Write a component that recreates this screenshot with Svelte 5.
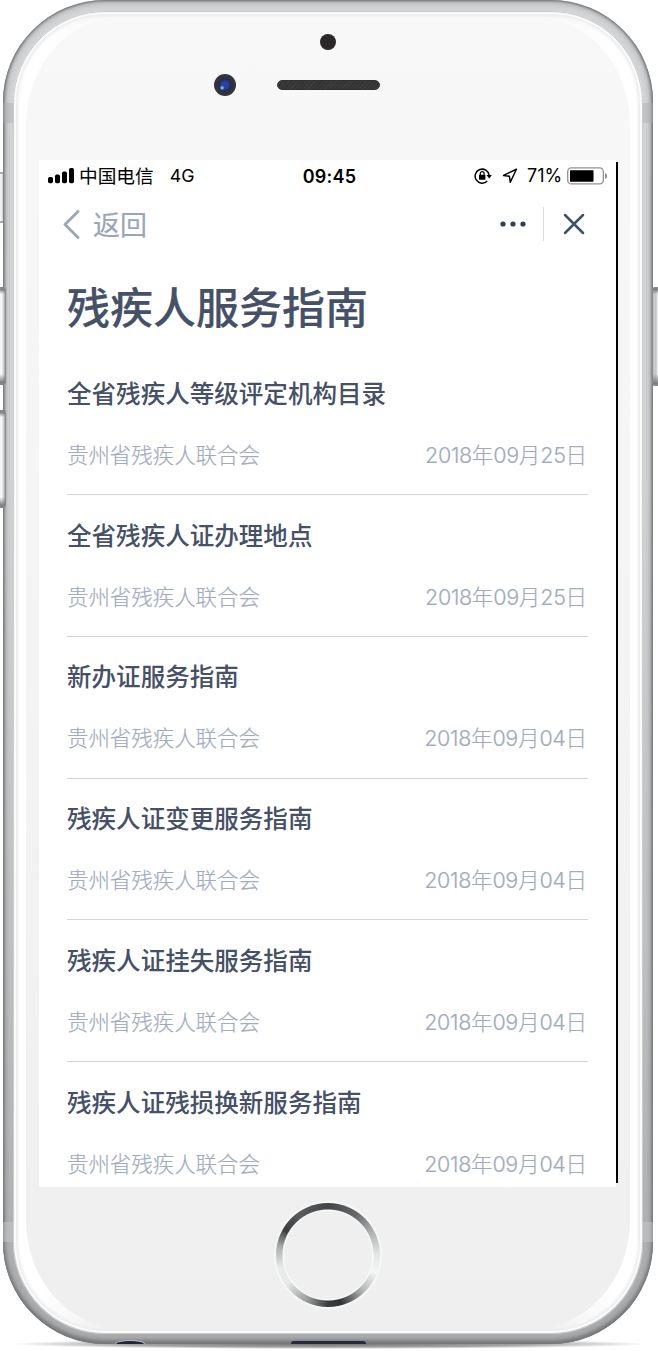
<script>
  const org = '贵州省残疾人联合会';
  const items = [
    { title: '全省残疾人等级评定机构目录', date: ['2018', '09', '25'] },
    { title: '全省残疾人证办理地点', date: ['2018', '09', '25'] },
    { title: '新办证服务指南', date: ['2018', '09', '04'] },
    { title: '残疾人证变更服务指南', date: ['2018', '09', '04'] },
    { title: '残疾人证挂失服务指南', date: ['2018', '09', '04'] },
    { title: '残疾人证残损换新服务指南', date: ['2018', '09', '04'] }
  ];
</script>

<div class="stage">
  <i class="ground"></i>
  <i class="key mute"></i>
  <i class="key up"></i>
  <i class="key down"></i>
  <i class="key power"></i>
  <div class="phone">
    <i class="band tl"></i><i class="band tr"></i><i class="band bl"></i><i class="band br"></i>
    <i class="jack"></i><i class="port"></i>
    <div class="bezel">
      <div class="face">
        <div class="top">
          <i class="sensor"></i>
          <i class="lens"></i>
          <i class="speaker"></i>
        </div>
        <div class="screen">
          <div class="status">
            <div class="side">
              <svg class="signal" width="27" height="16" viewBox="0 0 27 16">
                <rect x="0" y="9" width="5" height="6.3" rx="1.7" /><rect x="7" y="6.5" width="5" height="8.8" rx="1.7" />
                <rect x="14" y="3.5" width="5" height="11.8" rx="1.7" /><rect x="21" y="0" width="5" height="15.3" rx="1.7" />
              </svg>
              <span class="carrier">中国电信</span>
              <span class="net">4G</span>
            </div>
            <div class="clock">09:45</div>
            <div class="side right">
              <svg class="lock" width="18" height="18" viewBox="0 0 18 18" fill="none" stroke="#000" stroke-width="1.5">
                <path d="M13.2 14A7 7 0 1 1 15.1 8.4" />
                <path d="M12.5 8h5.4l-2.7 3.6z" fill="#000" stroke="none" />
                <rect x="5" y="7.8" width="6.4" height="5" rx=".6" fill="#000" stroke="none" />
                <path d="M6.3 8.3V6.5a1.9 1.9 0 0 1 3.8 0v1.8" stroke-width="1.2" />
              </svg>
              <svg class="arrow" width="16" height="16" viewBox="0 0 16 16" fill="none" stroke="#000" stroke-width="1.5" stroke-linejoin="round">
                <path d="M14.4 1.2L1.5 7.4l5.9.9.9 5.9z" />
              </svg>
              <span class="pct">71%</span>
              <svg class="battery" width="41" height="18" viewBox="0 0 41 18">
                <rect x=".7" y=".9" width="35.6" height="16" rx="3.6" fill="none" stroke="#929292" stroke-width="1.3" />
                <rect x="3" y="3.2" width="23.5" height="11.5" rx=".6" />
                <path d="M38 6c2.8.6 2.8 5.4 0 6z" fill="#929292" />
              </svg>
            </div>
          </div>
          <div class="nav">
            <svg class="chev" width="18" height="30" viewBox="0 0 18 30" fill="none" stroke="#9aa5ba" stroke-width="2.8" stroke-linecap="round" stroke-linejoin="round">
              <path d="M15 2.5L2 15.5l13 13" />
            </svg>
            <span class="back">返回</span>
            <svg class="more" width="26" height="6" viewBox="0 0 26 6" fill="#323e54">
              <circle cx="3" cy="3" r="2.6" /><circle cx="13" cy="3" r="2.6" /><circle cx="23" cy="3" r="2.6" />
            </svg>
            <i class="rule"></i>
            <svg class="close" width="22" height="22" viewBox="0 0 22 22" fill="none" stroke="#42506a" stroke-width="2.5" stroke-linecap="round">
              <path d="M2 2l18 18M20 2L2 20" />
            </svg>
          </div>
          <h1>残疾人服务指南</h1>
          <ul>
            {#each items as item}
              <li>
                <h2>{item.title}</h2>
                <p>
                  <span>{org}</span>
                  <span class="date"><b>{item.date[0]}</b>年<b>{item.date[1]}</b>月<b>{item.date[2]}</b>日</span>
                </p>
              </li>
            {/each}
          </ul>
        </div>
        <i class="home"></i>
      </div>
    </div>
  </div>
</div>

<style>
  :global(body) { margin: 0; background: #fff; }
  * { box-sizing: border-box; }
  i { display: block; }
  .stage {
    position: relative;
    width: 658px;
    height: 1351px;
    padding: 0 5px 7px 3px;
    overflow: hidden;
    font-family: Inter, "Noto Sans CJK SC", sans-serif;
  }
  .ground {
    position: absolute;
    left: 12px;
    right: 12px;
    top: 1339px;
    height: 10px;
    background: radial-gradient(ellipse at center, rgba(0, 0, 0, .55) 0%, rgba(0, 0, 0, .36) 45%, rgba(0, 0, 0, 0) 71%);
  }
  .key {
    position: absolute;
    border: solid #85878a;
    background: linear-gradient(90deg, #fafafa, #e2e3e5 40%, #a5a7a9);
  }
  .mute { left: 0; top: 172px; width: 5px; height: 51px; border-width: 2px 0; border-color: #aaa; }
  .up, .down {
    left: 0;
    width: 6px;
    height: 98px;
    border-width: 2px 1px 2px 0;
    border-radius: 0 3px 3px 0;
    background: linear-gradient(#777 0, transparent 5px, transparent 85px, #777), linear-gradient(90deg, #f4f6f8 0 40%, #a7a9ab);
    z-index: 1;
  }
  .up { top: 287px; }
  .down { top: 410px; }
  .power {
    right: 0;
    top: 287px;
    width: 6px;
    height: 99px;
    border-width: 2px 0 2px 1px;
    border-radius: 3px 0 0 3px;
    background: linear-gradient(#777 0, transparent 5px, transparent 85px, #777), linear-gradient(90deg, #c5c6c8 0 60%, #f4f6f8);
    z-index: 1;
  }
  .phone {
    position: relative;
    height: 1344px;
    padding: 11px 10px 10px;
    border-radius: 102px;
    background: linear-gradient(#d2d3d5, #d1d3d5 35%, #bfc0c2 70%, #aaabad);
    box-shadow: inset 0 0 2px 1px #777, inset 0 0 6px 1px #8b8d8f, inset 0 -3px 4px #626466;
    overflow: hidden;
  }
  .band { position: absolute; width: 10px; height: 20px; }
  .tl, .tr { top: 103px; background: rgba(170, 172, 172, .42); }
  .bl, .br { top: 1222px; background: rgba(205, 207, 207, .4); }
  .tl, .bl { left: 0; }
  .tr, .br { right: 0; }
  .jack { position: absolute; left: 113px; bottom: 0; width: 28px; height: 3px; border-radius: 14px 14px 0 0 / 3px 3px 0 0; background: #1d2735; box-shadow: 0 0 0 1px #b9bbbd; }
  .port { position: absolute; left: 288px; bottom: 0; width: 75px; height: 3px; border-radius: 4px 4px 0 0; background: #252b3b; }
  .bezel {
    height: 1323px;
    padding: 6px 13px 6px;
    border-radius: 92px;
    background:
      linear-gradient(90deg, #fff 30px, rgba(255, 255, 255, 0) 95px calc(100% - 95px), #fff calc(100% - 30px)),
      linear-gradient(#f8f8f8, #efefef);
    box-shadow: inset 0 0 0 1px #c9cbcc, inset 0 0 0 3px #fbfbfb, inset 0 0 3px 5px #ececec;
  }
  .face {
    height: 1311px;
    padding: 0 11px 0 13px;
    border-radius: 96px / 108px;
    background: linear-gradient(#f8f8f8, #f7f7f7 10%, #f3f3f3 55%, #efefef);
  }
  .top {
    height: 143px;
    display: grid;
    grid-template-columns: 186px 63px 1fr;
    grid-template-rows: 49px 38px;
    align-items: center;
  }
  .sensor { grid-column: 1 / 4; justify-self: start; margin-left: 281px; width: 16px; height: 16px; border-radius: 50%; background: #2c2728; }
  .lens {
    justify-self: end;
    margin-right: -11px;
    width: 22px;
    height: 22px;
    border-radius: 50%;
    background: radial-gradient(circle at 37% 63%, #79a8e8 0 1px, transparent 2.5px), radial-gradient(circle, #26459b 0 3px, #1b2b60 6px, #303238 7px, #3a3a3d);
  }
  .speaker { grid-column: 3; margin-left: -11px; width: 103px; height: 10px; border-radius: 5px; background: repeating-linear-gradient(135deg, #353535 0 2px, #3c3c3c 2px 3px); border: 1px solid #303030; }
  .screen {
    width: 579px;
    height: 1027px;
    padding-right: 2px;
    overflow: hidden;
    background: linear-gradient(#000, #000) right 2px / 2px 1021px no-repeat, linear-gradient(#fff, #fff) left / 577px 100% no-repeat;
  }
  .status {
    display: grid;
    grid-template-columns: 1fr auto 1fr;
    align-items: center;
    height: 31px;
    padding: 0 8px 0 9px;
    color: #000;
  }
  .side { display: flex; align-items: center; }
  .right { justify-content: flex-end; }
  .carrier { margin-left: 4px; padding-bottom: 2px; font: 18.7px/28px "Noto Sans CJK SC", sans-serif; }
  .net { margin-left: 16px; font-size: 17.8px; letter-spacing: -.1px; }
  .clock { padding: 1px 0 0 3px; font-size: 18px; font-weight: 600; letter-spacing: .2px; }
  .lock { margin-right: 1px; }
  .arrow { margin-left: 9px; }
  .pct { margin-left: 9px; font-size: 18px; letter-spacing: -.1px; }
  .battery { margin-left: 5px; }
  .nav { display: flex; align-items: center; height: 66px; padding: 0 31px 0 24px; }
  .back { margin-left: 12px; font: 27px/40px "Noto Sans CJK SC", sans-serif; color: #9aa5ba; -webkit-text-stroke: .15px #9aa5ba; }
  .more { margin-left: auto; }
  .rule { width: 1px; height: 34px; margin: 0 19px 0 17px; background: #d9dadc; }
  h1 { margin: 18px 28px 0; font: 500 43px/60px "Noto Sans CJK SC", sans-serif; color: #465067; white-space: nowrap; -webkit-text-stroke: .15px #465067; }
  ul { margin: 40px 28px 0; padding: 0; list-style: none; }
  li { height: 141.75px; border-bottom: 1.5px solid #d3d4d6; padding-top: 21.5px; }
  li:first-child { height: 120px; padding-top: 0; }
  h2 { margin: 0; font: 500 24.55px/36px "Noto Sans CJK SC", sans-serif; color: #465067; white-space: nowrap; }
  p { display: flex; justify-content: space-between; margin: 27px 1px 0 0; font: 300 21.45px/32px "Noto Sans CJK SC", sans-serif; color: #a1abbd; white-space: nowrap; -webkit-text-stroke: .2px #a1abbd; }
  b { font: 300 21.5px/32px Inter, sans-serif; letter-spacing: -.33px; }
  .home {
    width: 104px;
    height: 104px;
    margin: 16px auto 0 237px;
    border-radius: 50%;
    background:
      radial-gradient(circle, #efefef 0 44px, #fafafa 44.5px 45px, transparent 46px),
      conic-gradient(#444548, #66686a 35deg, #aaacad 60deg, #e5e7e7 90deg, #f5f6f6 110deg, #b5b8b7 135deg, #333436 165deg, #3a3b3d 180deg, #999b9a 205deg, #e8eae9 235deg, #e8ebea 255deg, #aaacac 280deg, #3c3d40 300deg, #5a5b5e 325deg, #444548);
    box-shadow: 0 0 1px 2px #f7f7f7;
  }
</style>
